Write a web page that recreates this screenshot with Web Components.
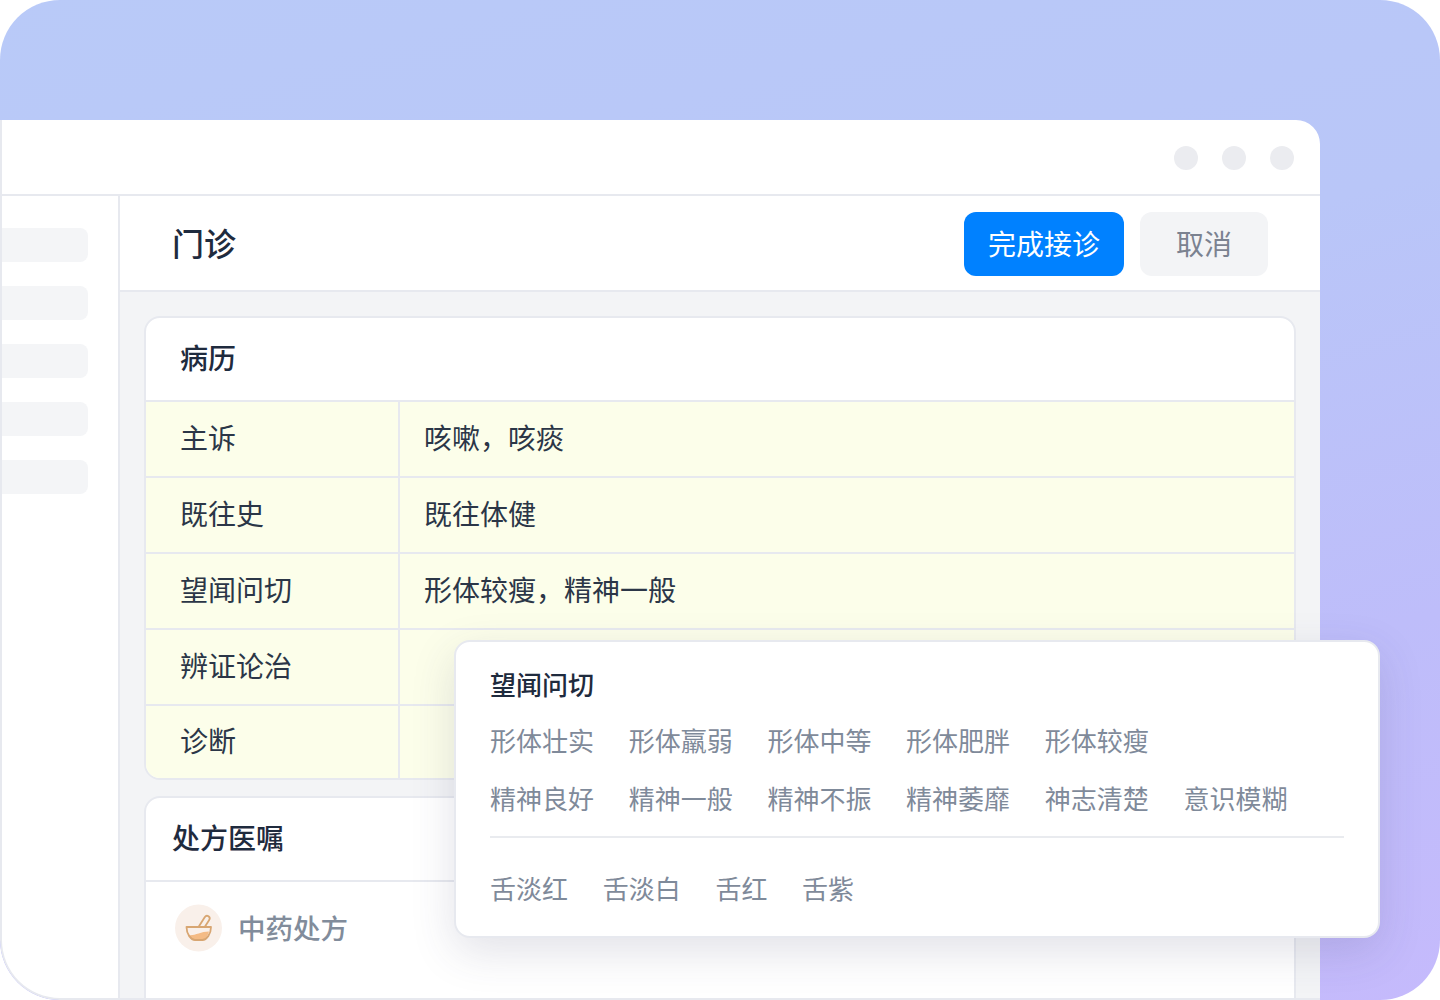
<!DOCTYPE html>
<html lang="zh-CN">
<head>
<meta charset="utf-8">
<title>门诊</title>
<style>
  html, body {
    margin: 0;
    background: #fff;
    font-family: "Noto Sans CJK SC", "Noto Sans", sans-serif;
    color: #1f2937;
  }
</style>
</head>
<body>
<app-stage>
  <app-window>
    <nav-rail></nav-rail>
    <visit-panel>
      <record-card heading="病历" inset>
        <record-row label="主诉">咳嗽，咳痰</record-row>
        <record-row label="既往史">既往体健</record-row>
        <record-row label="望闻问切">形体较瘦，精神一般</record-row>
        <record-row label="辨证论治"></record-row>
        <record-row label="诊断" last></record-row>
      </record-card>
      <record-card heading="处方医嘱" tall>
        <rx-title>中药处方</rx-title>
      </record-card>
    </visit-panel>
  </app-window>
  <pick-popover slot="over" heading="望闻问切">
    <pick-group>
      <span>形体壮实</span><span>形体羸弱</span><span>形体中等</span><span>形体肥胖</span><span>形体较瘦</span>
    </pick-group>
    <pick-group>
      <span>精神良好</span><span>精神一般</span><span>精神不振</span><span>精神萎靡</span><span>神志清楚</span><span>意识模糊</span>
    </pick-group>
    <pick-group ruled>
      <span>舌淡红</span><span>舌淡白</span><span>舌红</span><span>舌紫</span>
    </pick-group>
  </pick-popover>
</app-stage>

<script>
class AppStage extends HTMLElement {
  constructor() {
    super();
    this.attachShadow({ mode: 'open' });
  }

  connectedCallback() {
    this.shadowRoot.innerHTML = /* html */`
    <style>
      :host {
        display: block;
        position: relative;
        width: 1440px;
        height: 1000px;
        box-sizing: border-box;
        padding: 120px 120px 0 0;
        overflow: hidden;
        border-radius: 60px;
        background: linear-gradient(165deg, #b9caf8 0%, #b9c6f8 40%, #bebdfa 72%, #c5bafc 100%);
      }
    </style>
    <slot></slot>
    <slot name="over"></slot>
    `;
  }
}

class AppWindow extends HTMLElement {
  constructor() {
    super();
    this.attachShadow({ mode: 'open' });
  }

  connectedCallback() {
    this.shadowRoot.innerHTML = /* html */`
    <style>
      :host {
        display: flex;
        flex-direction: column;
        box-sizing: border-box;
        height: 880px;
        background: #fff;
        border-left: 2px solid #e7e9ef;
        border-bottom: 2px solid #e7e9ef;
        border-radius: 0 24px 0 60px;
        overflow: hidden;
      }
      .bar {
        flex: none;
        height: 76px;
        box-sizing: border-box;
        border-bottom: 2px solid #e7e9ef;
        display: flex;
        justify-content: flex-end;
        align-items: flex-start;
        gap: 24px;
        padding: 26px 26px 0 0;
      }
      .bar i {
        width: 24px;
        height: 24px;
        border-radius: 50%;
        background: #ebecf0;
      }
      .body {
        flex: 1;
        min-height: 0;
        display: flex;
      }
    </style>
    <div class="bar"><i></i><i></i><i></i></div>
    <div class="body"><slot></slot></div>
    `;
  }
}

class NavRail extends HTMLElement {
  constructor() {
    super();
    this.attachShadow({ mode: 'open' });
  }

  connectedCallback() {
    this.shadowRoot.innerHTML = /* html */`
    <style>
      :host {
        display: flex;
        flex: none;
        flex-direction: column;
        gap: 24px;
        box-sizing: border-box;
        width: 118px;
        padding: 32px 30px 0 0;
        border-right: 2px solid #e7e9ef;
      }
      i {
        height: 34px;
        background: #f4f5f7;
        border-radius: 0 8px 8px 0;
      }
    </style>
    <i></i><i></i><i></i><i></i><i></i>
    `;
  }
}

class VisitPanel extends HTMLElement {
  constructor() {
    super();
    this.attachShadow({ mode: 'open' });
  }

  connectedCallback() {
    this.shadowRoot.innerHTML = /* html */`
    <style>
      :host {
        display: flex;
        flex: 1;
        flex-direction: column;
        min-width: 0;
        background: #f3f4f6;
        overflow: hidden;
      }
      header {
        flex: none;
        height: 96px;
        box-sizing: border-box;
        display: flex;
        align-items: center;
        padding: 2px 52px 0;
        background: #fff;
        border-bottom: 2px solid #e7e9ef;
      }
      h1 {
        flex: 1;
        margin: 0 0 4px;
        font-size: 32px;
        font-weight: 500;
        color: #1f2b3e;
      }
      button {
        font: inherit;
        font-size: 28px;
        height: 64px;
        border: 0;
        border-radius: 12px;
        padding: 0 0 2px;
      }
      .ok { width: 160px; background: #0081ff; color: #fff; }
      .no { width: 128px; margin-left: 16px; background: #f3f4f6; color: #7b8290; }
      .cards {
        display: flex;
        flex-direction: column;
        gap: 16px;
        padding: 24px 24px 0;
      }
    </style>
    <header>
      <h1>门诊</h1>
      <button class="ok">完成接诊</button>
      <button class="no">取消</button>
    </header>
    <div class="cards"><slot></slot></div>
    `;
  }
}

class RecordCard extends HTMLElement {
  constructor() {
    super();
    this.attachShadow({ mode: 'open' });
  }

  connectedCallback() {
    this.shadowRoot.innerHTML = /* html */`
    <style>
      :host {
        display: block;
        flex: none;
        background: #fff;
        border: 2px solid #e7e9ef;
        border-radius: 16px;
        overflow: hidden;
      }
      :host([tall]) { height: 300px; }
      h2 {
        margin: 0;
        height: 84px;
        box-sizing: border-box;
        display: flex;
        align-items: center;
        padding: 0 0 4px 26px;
        font-size: 28px;
        font-weight: 500;
        color: #1f2b3e;
        border-bottom: 2px solid #e7e9ef;
      }
      :host([inset]) h2 { padding-left: 34px; }
    </style>
    <h2>${this.getAttribute('heading')}</h2>
    <slot></slot>
    `;
  }
}

class RecordRow extends HTMLElement {
  constructor() {
    super();
    this.attachShadow({ mode: 'open' });
  }

  connectedCallback() {
    this.shadowRoot.innerHTML = /* html */`
    <style>
      :host {
        display: flex;
        height: 76px;
        box-sizing: border-box;
        background: #fcfeea;
        border-bottom: 2px solid #e7e9ef;
        font-size: 28px;
        color: #2b3647;
      }
      :host([last]) { height: 72px; border-bottom: 0; }
      .label {
        flex: none;
        width: 254px;
        box-sizing: border-box;
        display: flex;
        align-items: center;
        padding: 0 0 4px 34px;
        border-right: 2px solid #e7e9ef;
      }
      .value {
        display: flex;
        align-items: center;
        padding: 0 0 4px 24px;
      }
    </style>
    <div class="label">${this.getAttribute('label')}</div>
    <div class="value"><slot></slot></div>
    `;
  }
}

class RxTitle extends HTMLElement {
  constructor() {
    super();
    this.attachShadow({ mode: 'open' });
  }

  connectedCallback() {
    this.shadowRoot.innerHTML = /* html */`
    <style>
      :host {
        display: flex;
        align-items: center;
        gap: 16px;
        padding: 22px 0 0 28px;
        font-size: 27.500px;
        font-weight: 500;
        color: #818c9b;
      }
      svg { flex: none; }
      span { margin-bottom: 2px; }
    </style>
    <svg width="48" height="48" viewBox="0 0 48 48" fill="none">
      <circle cx="24.500" cy="24" r="23.500" fill="#f9f0ea"/>
      <path d="M14 31c6 1.500 12-3.500 21-3.500 -1 4-4 8.500-7 8.500h-7c-3.200 0-5.800-2.500-7-5z" fill="#f4bb85"/>
      <path d="M12.500 23h24.500c0 7-4.500 13-8.500 13h-7.500c-4 0-8.500-6-8.500-13z" stroke="#d8a672" stroke-width="1.800" stroke-linejoin="round"/>
      <path d="M24.500 23l6.200-9.700c.9-1.400 2.500-1.800 3.800-1 1.300.9 1.500 2.500.7 3.800l-4.500 6.900" stroke="#d8a672" stroke-width="1.800" stroke-linejoin="round" stroke-linecap="round"/>
    </svg>
    <span><slot></slot></span>
    `;
  }
}

class PickPopover extends HTMLElement {
  constructor() {
    super();
    this.attachShadow({ mode: 'open' });
  }

  connectedCallback() {
    this.shadowRoot.innerHTML = /* html */`
    <style>
      :host {
        display: block;
        position: absolute;
        left: 454px;
        top: 640px;
        width: 926px;
        height: 298px;
        box-sizing: border-box;
        padding: 23px 34px 0;
        background: #fff;
        border: 2px solid #e7e9ef;
        border-radius: 16px;
        box-shadow: 0 14px 44px rgba(60, 60, 100, 0.15);
      }
      h3 {
        margin: 0 0 18px;
        font-size: 26px;
        line-height: 38px;
        font-weight: 500;
        color: #1f2b3e;
      }
    </style>
    <h3>${this.getAttribute('heading')}</h3>
    <slot></slot>
    `;
  }
}

class PickGroup extends HTMLElement {
  constructor() {
    super();
    this.attachShadow({ mode: 'open' });
  }

  connectedCallback() {
    this.shadowRoot.innerHTML = /* html */`
    <style>
      :host {
        display: flex;
        column-gap: 34.700px;
        margin-bottom: 20px;
        font-size: 26px;
        line-height: 38px;
        color: #7f8a9a;
      }
      :host([ruled]) {
        margin: -1px 0 0;
        padding-top: 31px;
        border-top: 2px solid #e9ebef;
      }
    </style>
    <slot></slot>
    `;
  }
}

customElements.define('app-stage', AppStage);
customElements.define('app-window', AppWindow);
customElements.define('nav-rail', NavRail);
customElements.define('visit-panel', VisitPanel);
customElements.define('record-card', RecordCard);
customElements.define('record-row', RecordRow);
customElements.define('rx-title', RxTitle);
customElements.define('pick-popover', PickPopover);
customElements.define('pick-group', PickGroup);
</script>
</body>
</html>
